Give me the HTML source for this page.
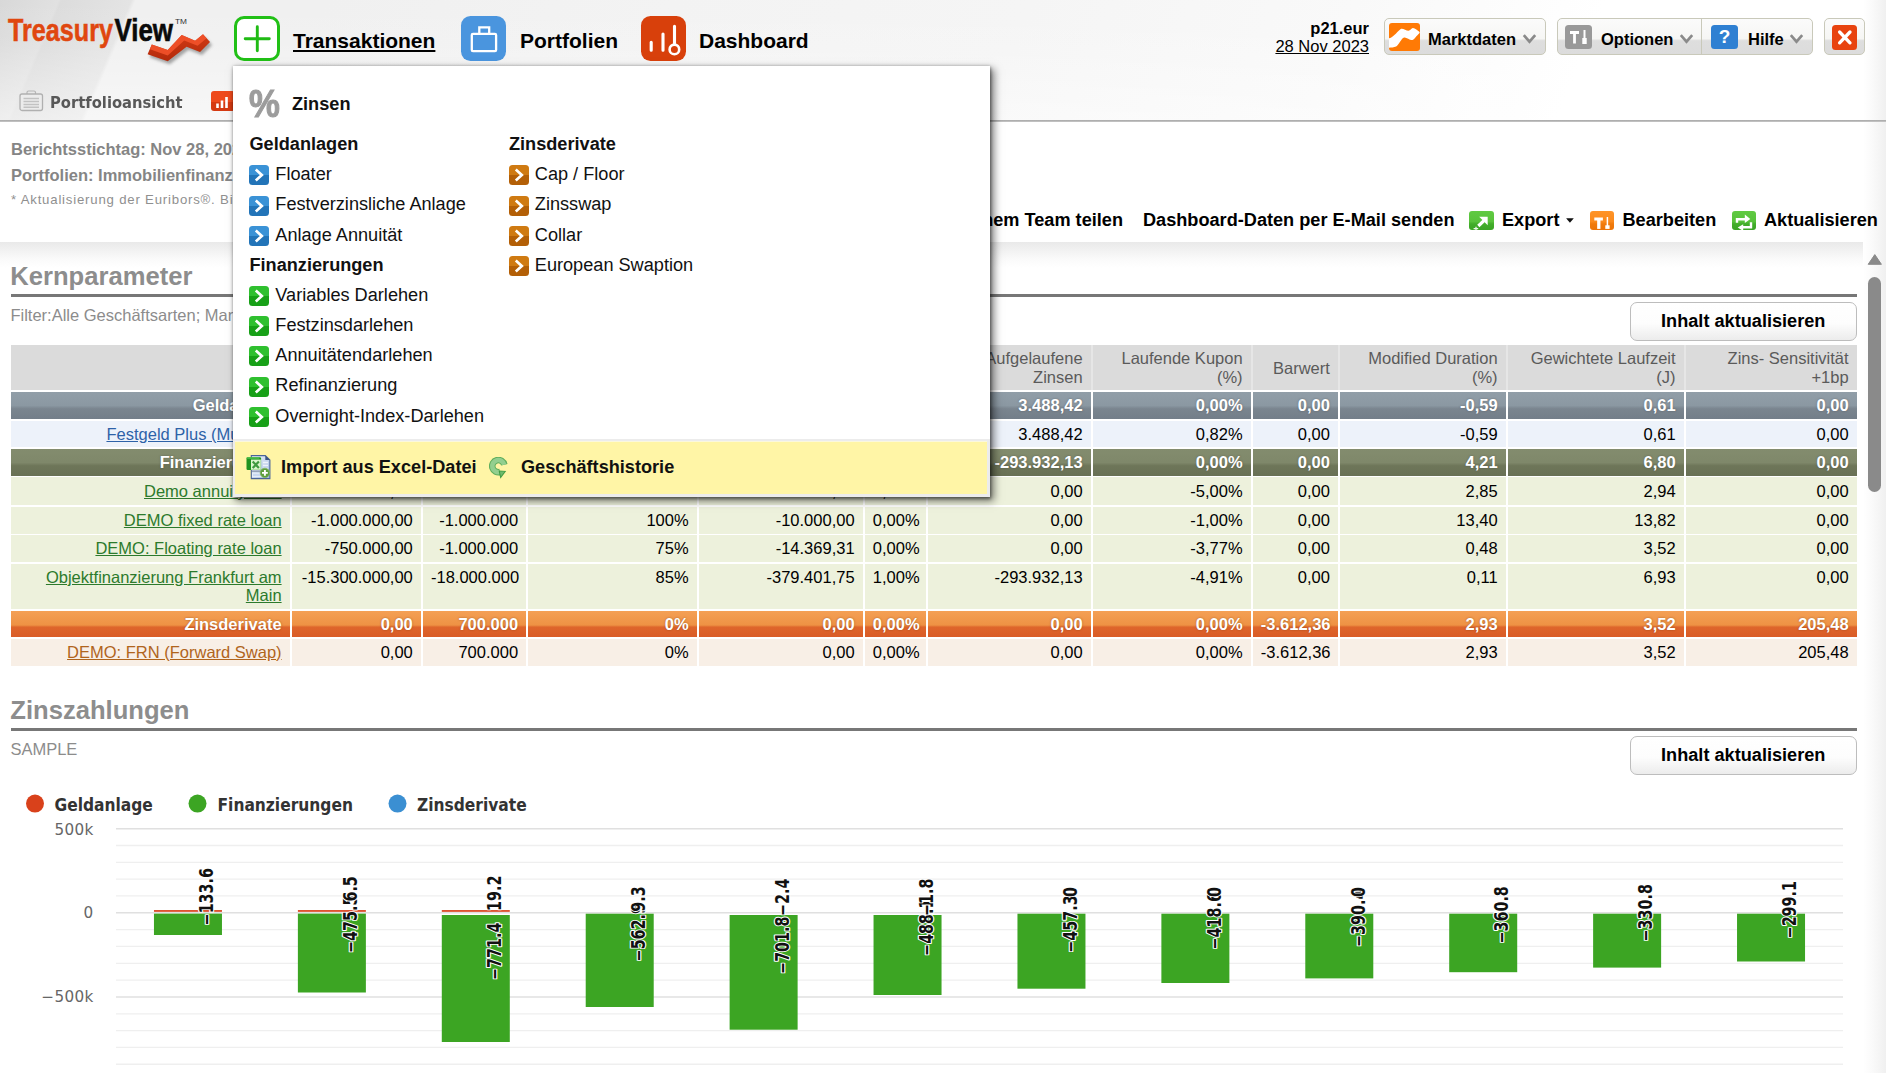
<!DOCTYPE html>
<html lang="de"><head><meta charset="utf-8"><title>TreasuryView</title>
<style>
*{box-sizing:border-box;margin:0;padding:0}
html,body{width:1886px;height:1073px;overflow:hidden;background:#fff}
body{position:relative;font-family:"Liberation Sans",Arial,sans-serif;font-size:16.5px;color:#000}
.abs{position:absolute}
.nw{white-space:nowrap}
a{color:inherit}
#hdr{left:0;top:0;width:1886px;height:120px;background:
 linear-gradient(180deg,rgba(255,255,255,0) 0%,rgba(255,255,255,.08) 35%,rgba(255,255,255,.48) 100%),
 linear-gradient(113deg,#d8d8d8 0px,#e1e1e1 54px,#dcdcdc 57px,#e4e4e4 121px,#f0f0f0 125px,#f0f0f0 300px,#f3f3f3 620px,#f5f5f5 950px,#f9f9f9 1250px,#fff 1480px)}
#hline{left:0;top:120px;width:1886px;height:2px;background:linear-gradient(#a6a6a6,#c9c9c9)}
.nav{top:27.5px;font-weight:bold;font-size:21px;line-height:26px;color:#000}
.ico45{top:16px;width:46px;height:46px;border-radius:9px}
.btn{top:18px;height:37px;border:1.5px solid #c9c9ba;border-radius:5px;background:linear-gradient(#fbfbfb 0%,#f6f6f4 56%,#dedede 62%,#dcdcdc 100%)}
.btxt{top:17px;font-weight:bold;font-size:16.5px;line-height:20px}
.tb{top:209px;font-weight:bold;font-size:18.15px;line-height:22px}
.h2{left:10.3px;font-weight:bold;font-size:25.6px;line-height:30px;color:#8d8d8d}
.hr{left:10.5px;width:1846.5px;height:3px;background:#777}
.ibtn{left:1629.5px;width:227.5px;height:39px;border:1.5px solid #bdbdbd;border-radius:7px;background:linear-gradient(#fff 0%,#fdfdfd 55%,#ececec 100%);font-weight:bold;font-size:18.15px;line-height:36px;text-align:center}
.c{position:absolute;text-align:right;padding-right:8.3px;padding-left:8.3px;white-space:nowrap;line-height:27px;height:27px;overflow:hidden}
.g1{background:linear-gradient(#919ea8 0%,#8b98a2 50%,#7a858f 62%,#737e89 100%);color:#fff;font-weight:bold;text-shadow:0 0 2px rgba(60,60,60,.5)}
.g2{background:linear-gradient(#838c6e 0%,#7f886a 50%,#6e7659 62%,#697155 100%);color:#fff;font-weight:bold;text-shadow:0 0 2px rgba(60,60,60,.5)}
.g3{background:linear-gradient(#f4a055 0%,#ee9244 54%,#de652b 62%,#d95c27 100%);color:#fff;font-weight:bold;text-shadow:0 0 2px rgba(90,40,0,.5)}
.r1{background:#edf2fa}
.r2{background:#edf1dc}
.r3{background:#f8efe6}
.th{background:#dbdbdb;color:#5a5a5a;line-height:18.3px;white-space:normal}
.lk1{color:#2d62a8;text-decoration:underline}
.lk2{color:#2c7a2c;text-decoration:underline}
.lk3{color:#b0641c;text-decoration:underline}
.mi{font-size:18.15px;line-height:22px;color:#111}
.mh{font-size:18.15px;line-height:22px;font-weight:bold;color:#111}
.arr{width:20px;height:20px;border-radius:3.5px}
</style></head>
<body>
<div id="hdr" class="abs"></div>
<div class="abs" style="left:1863px;top:0;width:23px;height:1073px;background:linear-gradient(90deg,rgba(255,255,255,0) 0%,rgba(250,250,250,1) 40%,#f0f0f0 100%)"></div>
<div id="hline" class="abs"></div>
<svg class="abs" style="left:0;top:0" width="230" height="70" viewBox="0 0 230 70">
<defs><linearGradient id="rb" x1="0" y1="0" x2="0" y2="1"><stop offset="0" stop-color="#d03a14"/><stop offset="1" stop-color="#b32a0b"/></linearGradient>
<filter id="sh" x="-20%" y="-20%" width="140%" height="160%"><feGaussianBlur stdDeviation="1.6"/></filter></defs>
<path d="M147.6 54.3 L151.8 44.6 L167.7 50.1 L181.7 35.1 L195.1 40.7 L203 34.2 L210 42.1 L200 52.1 L186.6 46.8 L167.7 61.3 Z" fill="#555" opacity=".5" filter="url(#sh)" transform="translate(2,3)"/>
<path d="M147.6 54.3 L151.8 44.6 L167.7 50.1 L181.7 35.1 L195.1 40.7 L203 34.2 L210 42.1 L200 52.1 L186.6 46.8 L167.7 61.3 Z" fill="url(#rb)"/>
<path d="M151.8 44.6 L167.7 50.1 L181.7 35.1 L195.1 40.7 L203 34.2 L206.6 38.3 L197.6 45.8 L184.2 40.6 L167.7 55.4 L149.9 49.3 Z" fill="#f2522a" opacity=".9"/>
<text x="8" y="41" font-family="Liberation Sans, Arial, sans-serif" font-weight="bold" font-size="30.5" fill="#e0470f" stroke="#e0470f" stroke-width=".55" textLength="105" lengthAdjust="spacingAndGlyphs">Treasury</text>
<text x="114.5" y="41" font-family="Liberation Sans, Arial, sans-serif" font-weight="bold" font-size="30.5" fill="#0a0a0a" stroke="#0a0a0a" stroke-width=".6" textLength="58.5" lengthAdjust="spacingAndGlyphs">View</text>
<text x="175" y="23.5" font-family="Liberation Sans, Arial, sans-serif" font-size="7.5" fill="#333" textLength="12" lengthAdjust="spacingAndGlyphs">TM</text>
</svg>
<div class="abs" style="left:234.4px;top:15.7px;width:45.8px;height:45.8px;border-radius:10px;background:#fff;border:3.2px solid #21c016"></div>
<svg class="abs" style="left:234px;top:15px" width="48" height="48"><path d="M23.3 11.8V35.7M11.2 23.8H35.3" stroke="#1fbb14" stroke-width="2.9" stroke-linecap="round" fill="none"/></svg>
<div class="abs nav nw" style="left:293px;text-decoration:underline;text-decoration-thickness:1.5px;text-underline-offset:1.6px">Transaktionen</div>
<div class="abs" style="left:460.7px;top:15.7px;width:45.3px;height:45.3px;border-radius:9.5px;background:#4a95de"></div>
<svg class="abs" style="left:460.7px;top:15.7px" width="46" height="46"><rect x="10.8" y="17.8" width="24.3" height="17.3" rx="1.2" fill="none" stroke="#fff" stroke-width="2.3"/><path d="M18.3 17.4V11.4h9.9V17.4" fill="none" stroke="#fff" stroke-width="2.3"/></svg>
<div class="abs nav nw" style="left:520px">Portfolien</div>
<div class="abs" style="left:640.8px;top:15.7px;width:45.3px;height:45.3px;border-radius:9.5px;background:#d8400b"></div>
<svg class="abs" style="left:640.8px;top:15.7px" width="46" height="46"><path d="M10.2 26.3v8M22 18v16.3M33.5 10.3v17" stroke="#fff" stroke-width="3.1" fill="none" stroke-linecap="round"/><circle cx="33.4" cy="33.4" r="4.8" fill="none" stroke="#fff" stroke-width="2.6"/></svg>
<div class="abs nav nw" style="left:699px">Dashboard</div>
<div class="abs nw" style="right:517px;top:19.3px;font-weight:bold;font-size:16.5px;line-height:19px;text-align:right">p21.eur</div>
<div class="abs nw" style="right:517px;top:37.2px;font-size:16.5px;line-height:19px;text-align:right;text-decoration:underline">28 Nov 2023</div>
<div class="abs btn" style="left:1384px;width:162px"></div>
<div class="abs" style="left:1389.3px;top:23.3px;width:30.6px;height:27.6px;border-radius:3px;background:#ff7a05;overflow:hidden"><svg width="31" height="28"><path d="M0 15.2 C3.5 15.2 7 10 11.7 6 C13.5 4.8 17 7.8 19.5 7.8 C21.2 7.8 22.3 5 23.9 5 C26.2 5 28.5 7.5 30.6 8.9 L30.6 9.9 C27 13 25.2 17 22.7 17 C20.5 17 17.2 14 15.2 14.5 C12 15.5 10 22 7.1 23.5 C5 24.6 2 24.5 0 24.8 Z" fill="#fff"/></svg></div>
<div class="abs btxt nw" style="left:1428px;top:28.5px">Marktdaten</div>
<svg class="abs" style="left:1521.5px;top:33.3px" width="16" height="12"><path d="M1.8 2.2 L7.5 8.6 L13.2 2.2" fill="none" stroke="#8a8a8a" stroke-width="2.7"/></svg>
<div class="abs btn" style="left:1557px;width:256px"></div>
<div class="abs" style="left:1700.5px;top:19px;width:1.5px;height:35px;background:#c9c9ba"></div>
<div class="abs" style="left:1565px;top:25px;width:27px;height:24px;border-radius:3.5px;background:#999"><svg width="27" height="24"><path d="M5 7.5h9M9.5 7.5v11" stroke="#fff" stroke-width="2.8" fill="none"/><path d="M19.5 5v9" stroke="#fff" stroke-width="2" fill="none"/><rect x="17.3" y="13" width="4.4" height="6" fill="#fff"/></svg></div>
<div class="abs btxt nw" style="left:1601px;top:28.5px">Optionen</div>
<svg class="abs" style="left:1678.5px;top:33.3px" width="16" height="12"><path d="M1.8 2.2 L7.5 8.6 L13.2 2.2" fill="none" stroke="#8a8a8a" stroke-width="2.7"/></svg>
<div class="abs" style="left:1711px;top:25px;width:27px;height:24px;border-radius:3.5px;background:#2f80d2;color:#fff;font-weight:bold;font-size:19px;line-height:24px;text-align:center">?</div>
<div class="abs btxt nw" style="left:1748px;top:28.5px">Hilfe</div>
<svg class="abs" style="left:1788.5px;top:33.3px" width="16" height="12"><path d="M1.8 2.2 L7.5 8.6 L13.2 2.2" fill="none" stroke="#8a8a8a" stroke-width="2.7"/></svg>
<div class="abs btn" style="left:1824px;width:41px"></div>
<div class="abs" style="left:1831.5px;top:24.5px;width:25.5px;height:25px;border-radius:3.5px;background:#e8430f"><svg width="26" height="25"><path d="M7.6 7 L18 17.8M18 7 L7.6 17.8" stroke="#fff" stroke-width="3.3" fill="none" stroke-linecap="round"/></svg></div>
<svg class="abs" style="left:19px;top:89.5px" width="25" height="22"><rect x="8" y="1" width="8.5" height="4" rx="1.5" fill="none" stroke="#b5b5b5" stroke-width="1.2"/><rect x="1" y="4" width="22.5" height="16.5" rx="2" fill="#ececec" stroke="#b0b0b0" stroke-width="1.3"/><path d="M4.5 8.5h15.5M4.5 11.5h15.5M4.5 14.5h15.5M4.5 17.3h15.5" stroke="#c2c2c2" stroke-width="1.4"/></svg>
<div class="abs nw" style="left:50px;top:93.2px;font-family:'DejaVu Sans',sans-serif;font-weight:bold;font-size:16.4px;line-height:20px;color:#585858;transform:scaleX(.9);transform-origin:0 50%">Portfolioansicht</div>
<div class="abs" style="left:211px;top:90.5px;width:24px;height:20.5px;border-radius:3px;background:linear-gradient(#ee4a1c 55%,#d53a12 55%)"><svg width="24" height="21"><path d="M6.5 12.5v4.5M11 9.5v7.5M15.5 6v11" stroke="#fff" stroke-width="2.6" fill="none"/></svg></div>
<div class="abs nw" style="left:11px;top:140px;font-weight:bold;font-size:16.5px;line-height:19px;color:#858585">Berichtsstichtag: Nov 28, 2023</div>
<div class="abs nw" style="left:11px;top:166px;font-weight:bold;font-size:16.5px;line-height:19px;color:#858585">Portfolien: Immobilienfinanzierung, Demo</div>
<div class="abs nw" style="left:11px;top:192.3px;font-size:13.2px;line-height:16px;letter-spacing:.8px;color:#8f8f8f">* Aktualisierung der Euribors®. Bitte beachten Sie die Hinweise.</div>
<div class="abs tb nw" style="right:763px">Mit meinem Team teilen</div>
<div class="abs tb nw" style="left:1143px">Dashboard-Daten per E-Mail senden</div>
<div class="abs" style="left:1469.3px;top:210.6px;width:24.5px;height:19.8px;border-radius:3px;background:linear-gradient(#60ca42 0%,#58c23b 55%,#42ad2a 68%,#3aa524 100%)"><svg width="25" height="20"><path d="M10.2 5.8H18.7V14.2Z" fill="#fff"/><path d="M15 9.6L9.3 15" stroke="#fff" stroke-width="3.2" fill="none"/><path d="M4.6 17.6h4.6M7 15.8v3.6" stroke="#fff" stroke-width="1.3" fill="none" opacity=".9"/></svg></div>
<div class="abs tb nw" style="left:1502px">Export</div>
<svg class="abs" style="left:1566px;top:218.4px" width="9" height="6"><path d="M0.1 0.3h7.7L3.95 4.7Z" fill="#111"/></svg>
<div class="abs" style="left:1590.2px;top:210.6px;width:24px;height:19.8px;border-radius:3px;background:linear-gradient(#ff9428 0%,#fb8a1c 55%,#f07a0c 68%,#ec7406 100%)"><svg width="24" height="20"><path d="M4.3 8h8.6" stroke="#fff" stroke-width="3" fill="none"/><path d="M8.8 7v10.9" stroke="#fff" stroke-width="3.3" fill="none"/><path d="M17.4 6v9" stroke="#fff" stroke-width="1.5" fill="none"/><rect x="15.3" y="14.3" width="4.3" height="3.6" fill="#fff"/></svg></div>
<div class="abs tb nw" style="left:1622.5px">Bearbeiten</div>
<div class="abs" style="left:1732px;top:210.6px;width:24.2px;height:19.8px;border-radius:3px;background:linear-gradient(#60ca42 0%,#58c23b 55%,#42ad2a 68%,#3aa524 100%)"><svg width="25" height="20"><path d="M5 11.8V8.2h8" stroke="#fff" stroke-width="2.4" fill="none"/><path d="M12.8 3.6L18.3 7.9L12.8 12Z" fill="#fff"/><path d="M19 11.3v5h-8" stroke="#fff" stroke-width="2.4" fill="none"/><path d="M11.2 13.2L5.7 16.6L11.2 19.9Z" fill="#fff"/></svg></div>
<div class="abs tb nw" style="left:1764px">Aktualisieren</div>
<div class="abs" style="left:0;top:242px;width:1863px;height:26px;background:linear-gradient(#e9e9e9 0%,#f1f1f1 30%,#fafafa 65%,#fff 100%)"></div>
<svg class="abs" style="left:1866px;top:253px" width="18" height="13"><path d="M2.2 11.3 L8.8 1.6 L15.4 11.3 Z" fill="#8a8a8a" stroke="#8a8a8a" stroke-width="1" stroke-linejoin="round"/></svg>
<div class="abs" style="left:1868px;top:277px;width:13.3px;height:214.5px;border-radius:6.6px;background:#8a8a8a"></div>
<div class="abs h2 nw" style="top:260.5px">Kernparameter</div>
<div class="abs hr" style="top:293.6px"></div>
<div class="abs nw" style="left:10.4px;top:306px;font-size:16.5px;line-height:19px;color:#8c8c8c">Filter:Alle Geschäftsarten; Marktdaten per 28.11.2023</div>
<div class="abs ibtn" style="top:301.5px">Inhalt aktualisieren</div>
<div class="abs" style="left:11px;top:345.2px;width:1846px;height:44.4px;background:#e6e6e6"></div>
<div class="c th" style="left:11px;top:345.2px;width:278.9px;height:44.4px;padding-top:13.4px"></div>
<div class="c th" style="left:291.5px;top:345.2px;width:129.6px;height:44.4px;padding-top:4.2px">Aktueller Betrag</div>
<div class="c th" style="left:422.7px;top:345.2px;width:103.7px;height:44.4px;padding-top:13.4px">Nominal</div>
<div class="c th" style="left:528px;top:345.2px;width:168.9px;height:44.4px;padding-top:4.2px">Auslastung (%)</div>
<div class="c th" style="left:698.5px;top:345.2px;width:164.4px;height:44.4px;padding-top:4.2px">Zinsen lfd. Jahr</div>
<div class="c th" style="left:864.5px;top:345.2px;width:61.6px;height:44.4px;padding-top:13.4px">Marge</div>
<div class="c th" style="left:927.7px;top:345.2px;width:163.2px;height:44.4px;padding-top:4.2px">Aufgelaufene Zinsen</div>
<div class="c th" style="left:1092.5px;top:345.2px;width:158.4px;height:44.4px;padding-top:4.2px">Laufende Kupon (%)</div>
<div class="c th" style="left:1252.5px;top:345.2px;width:85.7px;height:44.4px;padding-top:13.4px">Barwert</div>
<div class="c th" style="left:1339.8px;top:345.2px;width:166.1px;height:44.4px;padding-top:4.2px">Modified Duration (%)</div>
<div class="c th" style="left:1507.5px;top:345.2px;width:176.4px;height:44.4px;padding-top:4.2px">Gewichtete Laufzeit (J)</div>
<div class="c th" style="left:1685.5px;top:345.2px;width:171.4px;height:44.4px;padding-top:4.2px">Zins- Sensitivität +1bp</div>
<div class="c g1" style="left:11px;width:278.9px;top:391.5px;height:27.2px;line-height:27.2px;padding-top:0px;">Geldanlage</div><div class="c g1" style="left:291.5px;width:129.6px;top:391.5px;height:27.2px;line-height:27.2px;padding-top:0px;">100.000,00</div><div class="c g1" style="left:422.7px;width:103.7px;top:391.5px;height:27.2px;line-height:27.2px;padding-top:0px;">100.000</div><div class="c g1" style="left:528px;width:168.9px;top:391.5px;height:27.2px;line-height:27.2px;padding-top:0px;">100%</div><div class="c g1" style="left:698.5px;width:164.4px;top:391.5px;height:27.2px;line-height:27.2px;padding-top:0px;">820,00</div><div class="c g1" style="left:864.5px;width:61.6px;top:391.5px;height:27.2px;line-height:27.2px;padding-top:0px;">0,00%</div><div class="c g1" style="left:927.7px;width:163.2px;top:391.5px;height:27.2px;line-height:27.2px;padding-top:0px;">3.488,42</div><div class="c g1" style="left:1092.5px;width:158.4px;top:391.5px;height:27.2px;line-height:27.2px;padding-top:0px;">0,00%</div><div class="c g1" style="left:1252.5px;width:85.7px;top:391.5px;height:27.2px;line-height:27.2px;padding-top:0px;">0,00</div><div class="c g1" style="left:1339.8px;width:166.1px;top:391.5px;height:27.2px;line-height:27.2px;padding-top:0px;">-0,59</div><div class="c g1" style="left:1507.5px;width:176.4px;top:391.5px;height:27.2px;line-height:27.2px;padding-top:0px;">0,61</div><div class="c g1" style="left:1685.5px;width:171.4px;top:391.5px;height:27.2px;line-height:27.2px;padding-top:0px;">0,00</div>
<div class="c r1" style="left:11px;width:278.9px;top:420.5px;height:26.9px;line-height:26.9px;padding-top:0px;"><a class="lk1">Festgeld Plus (Muster I)</a></div><div class="c r1" style="left:291.5px;width:129.6px;top:420.5px;height:26.9px;line-height:26.9px;padding-top:0px;">100.000,00</div><div class="c r1" style="left:422.7px;width:103.7px;top:420.5px;height:26.9px;line-height:26.9px;padding-top:0px;">100.000</div><div class="c r1" style="left:528px;width:168.9px;top:420.5px;height:26.9px;line-height:26.9px;padding-top:0px;">100%</div><div class="c r1" style="left:698.5px;width:164.4px;top:420.5px;height:26.9px;line-height:26.9px;padding-top:0px;">820,00</div><div class="c r1" style="left:864.5px;width:61.6px;top:420.5px;height:26.9px;line-height:26.9px;padding-top:0px;">0,00%</div><div class="c r1" style="left:927.7px;width:163.2px;top:420.5px;height:26.9px;line-height:26.9px;padding-top:0px;">3.488,42</div><div class="c r1" style="left:1092.5px;width:158.4px;top:420.5px;height:26.9px;line-height:26.9px;padding-top:0px;">0,82%</div><div class="c r1" style="left:1252.5px;width:85.7px;top:420.5px;height:26.9px;line-height:26.9px;padding-top:0px;">0,00</div><div class="c r1" style="left:1339.8px;width:166.1px;top:420.5px;height:26.9px;line-height:26.9px;padding-top:0px;">-0,59</div><div class="c r1" style="left:1507.5px;width:176.4px;top:420.5px;height:26.9px;line-height:26.9px;padding-top:0px;">0,61</div><div class="c r1" style="left:1685.5px;width:171.4px;top:420.5px;height:26.9px;line-height:26.9px;padding-top:0px;">0,00</div>
<div class="c g2" style="left:11px;width:278.9px;top:449.2px;height:26.4px;line-height:26.4px;padding-top:0px;">Finanzierungen</div><div class="c g2" style="left:291.5px;width:129.6px;top:449.2px;height:26.4px;line-height:26.4px;padding-top:0px;">-17.550.000,00</div><div class="c g2" style="left:422.7px;width:103.7px;top:449.2px;height:26.4px;line-height:26.4px;padding-top:0px;">-20.500.000</div><div class="c g2" style="left:528px;width:168.9px;top:449.2px;height:26.4px;line-height:26.4px;padding-top:0px;">86%</div><div class="c g2" style="left:698.5px;width:164.4px;top:449.2px;height:26.4px;line-height:26.4px;padding-top:0px;">-428.771,06</div><div class="c g2" style="left:864.5px;width:61.6px;top:449.2px;height:26.4px;line-height:26.4px;padding-top:0px;">0,00%</div><div class="c g2" style="left:927.7px;width:163.2px;top:449.2px;height:26.4px;line-height:26.4px;padding-top:0px;">-293.932,13</div><div class="c g2" style="left:1092.5px;width:158.4px;top:449.2px;height:26.4px;line-height:26.4px;padding-top:0px;">0,00%</div><div class="c g2" style="left:1252.5px;width:85.7px;top:449.2px;height:26.4px;line-height:26.4px;padding-top:0px;">0,00</div><div class="c g2" style="left:1339.8px;width:166.1px;top:449.2px;height:26.4px;line-height:26.4px;padding-top:0px;">4,21</div><div class="c g2" style="left:1507.5px;width:176.4px;top:449.2px;height:26.4px;line-height:26.4px;padding-top:0px;">6,80</div><div class="c g2" style="left:1685.5px;width:171.4px;top:449.2px;height:26.4px;line-height:26.4px;padding-top:0px;">0,00</div>
<div class="c r2" style="left:11px;width:278.9px;top:477.2px;height:27.6px;line-height:27.6px;padding-top:0.6px;"><a class="lk2">Demo annuity loan</a></div><div class="c r2" style="left:291.5px;width:129.6px;top:477.2px;height:27.6px;line-height:27.6px;padding-top:0.6px;">-500.000,00</div><div class="c r2" style="left:422.7px;width:103.7px;top:477.2px;height:27.6px;line-height:27.6px;padding-top:0.6px;">-500.000</div><div class="c r2" style="left:528px;width:168.9px;top:477.2px;height:27.6px;line-height:27.6px;padding-top:0.6px;">100%</div><div class="c r2" style="left:698.5px;width:164.4px;top:477.2px;height:27.6px;line-height:27.6px;padding-top:0.6px;">-25.000,00</div><div class="c r2" style="left:864.5px;width:61.6px;top:477.2px;height:27.6px;line-height:27.6px;padding-top:0.6px;">0,00%</div><div class="c r2" style="left:927.7px;width:163.2px;top:477.2px;height:27.6px;line-height:27.6px;padding-top:0.6px;">0,00</div><div class="c r2" style="left:1092.5px;width:158.4px;top:477.2px;height:27.6px;line-height:27.6px;padding-top:0.6px;">-5,00%</div><div class="c r2" style="left:1252.5px;width:85.7px;top:477.2px;height:27.6px;line-height:27.6px;padding-top:0.6px;">0,00</div><div class="c r2" style="left:1339.8px;width:166.1px;top:477.2px;height:27.6px;line-height:27.6px;padding-top:0.6px;">2,85</div><div class="c r2" style="left:1507.5px;width:176.4px;top:477.2px;height:27.6px;line-height:27.6px;padding-top:0.6px;">2,94</div><div class="c r2" style="left:1685.5px;width:171.4px;top:477.2px;height:27.6px;line-height:27.6px;padding-top:0.6px;">0,00</div>
<div class="c r2" style="left:11px;width:278.9px;top:506.5px;height:27.0px;line-height:27.0px;padding-top:0px;"><a class="lk2">DEMO fixed rate loan</a></div><div class="c r2" style="left:291.5px;width:129.6px;top:506.5px;height:27.0px;line-height:27.0px;padding-top:0px;">-1.000.000,00</div><div class="c r2" style="left:422.7px;width:103.7px;top:506.5px;height:27.0px;line-height:27.0px;padding-top:0px;">-1.000.000</div><div class="c r2" style="left:528px;width:168.9px;top:506.5px;height:27.0px;line-height:27.0px;padding-top:0px;">100%</div><div class="c r2" style="left:698.5px;width:164.4px;top:506.5px;height:27.0px;line-height:27.0px;padding-top:0px;">-10.000,00</div><div class="c r2" style="left:864.5px;width:61.6px;top:506.5px;height:27.0px;line-height:27.0px;padding-top:0px;">0,00%</div><div class="c r2" style="left:927.7px;width:163.2px;top:506.5px;height:27.0px;line-height:27.0px;padding-top:0px;">0,00</div><div class="c r2" style="left:1092.5px;width:158.4px;top:506.5px;height:27.0px;line-height:27.0px;padding-top:0px;">-1,00%</div><div class="c r2" style="left:1252.5px;width:85.7px;top:506.5px;height:27.0px;line-height:27.0px;padding-top:0px;">0,00</div><div class="c r2" style="left:1339.8px;width:166.1px;top:506.5px;height:27.0px;line-height:27.0px;padding-top:0px;">13,40</div><div class="c r2" style="left:1507.5px;width:176.4px;top:506.5px;height:27.0px;line-height:27.0px;padding-top:0px;">13,82</div><div class="c r2" style="left:1685.5px;width:171.4px;top:506.5px;height:27.0px;line-height:27.0px;padding-top:0px;">0,00</div>
<div class="c r2" style="left:11px;width:278.9px;top:535.2px;height:27.1px;line-height:27.1px;padding-top:0px;"><a class="lk2">DEMO: Floating rate loan</a></div><div class="c r2" style="left:291.5px;width:129.6px;top:535.2px;height:27.1px;line-height:27.1px;padding-top:0px;">-750.000,00</div><div class="c r2" style="left:422.7px;width:103.7px;top:535.2px;height:27.1px;line-height:27.1px;padding-top:0px;">-1.000.000</div><div class="c r2" style="left:528px;width:168.9px;top:535.2px;height:27.1px;line-height:27.1px;padding-top:0px;">75%</div><div class="c r2" style="left:698.5px;width:164.4px;top:535.2px;height:27.1px;line-height:27.1px;padding-top:0px;">-14.369,31</div><div class="c r2" style="left:864.5px;width:61.6px;top:535.2px;height:27.1px;line-height:27.1px;padding-top:0px;">0,00%</div><div class="c r2" style="left:927.7px;width:163.2px;top:535.2px;height:27.1px;line-height:27.1px;padding-top:0px;">0,00</div><div class="c r2" style="left:1092.5px;width:158.4px;top:535.2px;height:27.1px;line-height:27.1px;padding-top:0px;">-3,77%</div><div class="c r2" style="left:1252.5px;width:85.7px;top:535.2px;height:27.1px;line-height:27.1px;padding-top:0px;">0,00</div><div class="c r2" style="left:1339.8px;width:166.1px;top:535.2px;height:27.1px;line-height:27.1px;padding-top:0px;">0,48</div><div class="c r2" style="left:1507.5px;width:176.4px;top:535.2px;height:27.1px;line-height:27.1px;padding-top:0px;">3,52</div><div class="c r2" style="left:1685.5px;width:171.4px;top:535.2px;height:27.1px;line-height:27.1px;padding-top:0px;">0,00</div>
<div class="c r2" style="left:11px;width:278.9px;top:563.9px;height:45.0px;line-height:18.4px;padding-top:4.2px;white-space:normal;"><a class="lk2">Objektfinanzierung Frankfurt am Main</a></div><div class="c r2" style="left:291.5px;width:129.6px;top:563.9px;height:45.0px;line-height:18.4px;padding-top:4.2px;">-15.300.000,00</div><div class="c r2" style="left:422.7px;width:103.7px;top:563.9px;height:45.0px;line-height:18.4px;padding-top:4.2px;">-18.000.000</div><div class="c r2" style="left:528px;width:168.9px;top:563.9px;height:45.0px;line-height:18.4px;padding-top:4.2px;">85%</div><div class="c r2" style="left:698.5px;width:164.4px;top:563.9px;height:45.0px;line-height:18.4px;padding-top:4.2px;">-379.401,75</div><div class="c r2" style="left:864.5px;width:61.6px;top:563.9px;height:45.0px;line-height:18.4px;padding-top:4.2px;">1,00%</div><div class="c r2" style="left:927.7px;width:163.2px;top:563.9px;height:45.0px;line-height:18.4px;padding-top:4.2px;">-293.932,13</div><div class="c r2" style="left:1092.5px;width:158.4px;top:563.9px;height:45.0px;line-height:18.4px;padding-top:4.2px;">-4,91%</div><div class="c r2" style="left:1252.5px;width:85.7px;top:563.9px;height:45.0px;line-height:18.4px;padding-top:4.2px;">0,00</div><div class="c r2" style="left:1339.8px;width:166.1px;top:563.9px;height:45.0px;line-height:18.4px;padding-top:4.2px;">0,11</div><div class="c r2" style="left:1507.5px;width:176.4px;top:563.9px;height:45.0px;line-height:18.4px;padding-top:4.2px;">6,93</div><div class="c r2" style="left:1685.5px;width:171.4px;top:563.9px;height:45.0px;line-height:18.4px;padding-top:4.2px;">0,00</div>
<div class="c g3" style="left:11px;width:278.9px;top:610.6px;height:26.6px;line-height:26.6px;padding-top:0px;">Zinsderivate</div><div class="c g3" style="left:291.5px;width:129.6px;top:610.6px;height:26.6px;line-height:26.6px;padding-top:0px;">0,00</div><div class="c g3" style="left:422.7px;width:103.7px;top:610.6px;height:26.6px;line-height:26.6px;padding-top:0px;">700.000</div><div class="c g3" style="left:528px;width:168.9px;top:610.6px;height:26.6px;line-height:26.6px;padding-top:0px;">0%</div><div class="c g3" style="left:698.5px;width:164.4px;top:610.6px;height:26.6px;line-height:26.6px;padding-top:0px;">0,00</div><div class="c g3" style="left:864.5px;width:61.6px;top:610.6px;height:26.6px;line-height:26.6px;padding-top:0px;">0,00%</div><div class="c g3" style="left:927.7px;width:163.2px;top:610.6px;height:26.6px;line-height:26.6px;padding-top:0px;">0,00</div><div class="c g3" style="left:1092.5px;width:158.4px;top:610.6px;height:26.6px;line-height:26.6px;padding-top:0px;">0,00%</div><div class="c g3" style="left:1252.5px;width:85.7px;top:610.6px;height:26.6px;line-height:26.6px;padding-top:0px;">-3.612,36</div><div class="c g3" style="left:1339.8px;width:166.1px;top:610.6px;height:26.6px;line-height:26.6px;padding-top:0px;">2,93</div><div class="c g3" style="left:1507.5px;width:176.4px;top:610.6px;height:26.6px;line-height:26.6px;padding-top:0px;">3,52</div><div class="c g3" style="left:1685.5px;width:171.4px;top:610.6px;height:26.6px;line-height:26.6px;padding-top:0px;">205,48</div>
<div class="c r3" style="left:11px;width:278.9px;top:638.9px;height:27.4px;line-height:27.4px;padding-top:0px;"><a class="lk3">DEMO: FRN (Forward Swap)</a></div><div class="c r3" style="left:291.5px;width:129.6px;top:638.9px;height:27.4px;line-height:27.4px;padding-top:0px;">0,00</div><div class="c r3" style="left:422.7px;width:103.7px;top:638.9px;height:27.4px;line-height:27.4px;padding-top:0px;">700.000</div><div class="c r3" style="left:528px;width:168.9px;top:638.9px;height:27.4px;line-height:27.4px;padding-top:0px;">0%</div><div class="c r3" style="left:698.5px;width:164.4px;top:638.9px;height:27.4px;line-height:27.4px;padding-top:0px;">0,00</div><div class="c r3" style="left:864.5px;width:61.6px;top:638.9px;height:27.4px;line-height:27.4px;padding-top:0px;">0,00%</div><div class="c r3" style="left:927.7px;width:163.2px;top:638.9px;height:27.4px;line-height:27.4px;padding-top:0px;">0,00</div><div class="c r3" style="left:1092.5px;width:158.4px;top:638.9px;height:27.4px;line-height:27.4px;padding-top:0px;">0,00%</div><div class="c r3" style="left:1252.5px;width:85.7px;top:638.9px;height:27.4px;line-height:27.4px;padding-top:0px;">-3.612,36</div><div class="c r3" style="left:1339.8px;width:166.1px;top:638.9px;height:27.4px;line-height:27.4px;padding-top:0px;">2,93</div><div class="c r3" style="left:1507.5px;width:176.4px;top:638.9px;height:27.4px;line-height:27.4px;padding-top:0px;">3,52</div><div class="c r3" style="left:1685.5px;width:171.4px;top:638.9px;height:27.4px;line-height:27.4px;padding-top:0px;">205,48</div>
<div class="abs h2 nw" style="top:695.2px">Zinszahlungen</div>
<div class="abs hr" style="top:728px"></div>
<div class="abs nw" style="left:10.4px;top:740.3px;font-size:16.5px;line-height:19px;color:#8c8c8c">SAMPLE</div>
<div class="abs ibtn" style="top:736px">Inhalt aktualisieren</div>
<svg class="abs" style="left:0;top:780px" width="1863" height="293" viewBox="0 780 1863 293" font-family="DejaVu Sans, sans-serif">
<path d="M116.0 828.65H1843.0" stroke="#e0e0e0" stroke-width="1.5"/>
<path d="M116.0 845.48H1843.0" stroke="#efefef" stroke-width="1.3"/>
<path d="M116.0 862.31H1843.0" stroke="#efefef" stroke-width="1.3"/>
<path d="M116.0 879.14H1843.0" stroke="#efefef" stroke-width="1.3"/>
<path d="M116.0 895.97H1843.0" stroke="#efefef" stroke-width="1.3"/>
<path d="M116.0 912.80H1843.0" stroke="#e0e0e0" stroke-width="1.5"/>
<path d="M116.0 929.63H1843.0" stroke="#efefef" stroke-width="1.3"/>
<path d="M116.0 946.46H1843.0" stroke="#efefef" stroke-width="1.3"/>
<path d="M116.0 963.29H1843.0" stroke="#efefef" stroke-width="1.3"/>
<path d="M116.0 980.12H1843.0" stroke="#efefef" stroke-width="1.3"/>
<path d="M116.0 996.95H1843.0" stroke="#e0e0e0" stroke-width="1.5"/>
<path d="M116.0 1013.78H1843.0" stroke="#efefef" stroke-width="1.3"/>
<path d="M116.0 1030.61H1843.0" stroke="#efefef" stroke-width="1.3"/>
<path d="M116.0 1047.44H1843.0" stroke="#efefef" stroke-width="1.3"/>
<path d="M116.0 1064.27H1843.0" stroke="#efefef" stroke-width="1.3"/>
<circle cx="35" cy="803.6" r="9" fill="#d9411b"/>
<text transform="translate(54.5 811) scale(.9 1)" font-size="17.2" font-weight="bold" fill="#333">Geldanlage</text>
<circle cx="197.5" cy="803.6" r="9" fill="#3ca523"/>
<text transform="translate(217.5 811) scale(.9 1)" font-size="17.2" font-weight="bold" fill="#333">Finanzierungen</text>
<circle cx="397.5" cy="803.6" r="9" fill="#3b8fd2"/>
<text transform="translate(417 811) scale(.9 1)" font-size="17.2" font-weight="bold" fill="#333">Zinsderivate</text>
<text x="93.6" y="835" font-family="DejaVu Sans, sans-serif" font-size="15.2" letter-spacing=".35" fill="#666" text-anchor="end">500k</text>
<text x="93.6" y="918.3" font-family="DejaVu Sans, sans-serif" font-size="15.2" letter-spacing=".35" fill="#666" text-anchor="end">0</text>
<text x="93.6" y="1002.3" font-family="DejaVu Sans, sans-serif" font-size="15.2" letter-spacing=".35" fill="#666" text-anchor="end">−500k</text>
<rect x="153.96" y="913.6" width="68" height="21.4" fill="#3ca523"/>
<rect x="153.96" y="910.1" width="68" height="1.7" fill="#d9411b"/>
<rect x="297.88" y="913.6" width="68" height="78.9" fill="#3ca523"/>
<rect x="297.88" y="910.1" width="68" height="1.7" fill="#d9411b"/>
<rect x="441.79" y="915" width="68" height="127.0" fill="#3ca523"/>
<rect x="441.79" y="910.1" width="68" height="1.7" fill="#d9411b"/>
<rect x="585.71" y="913.7" width="68" height="93.3" fill="#3ca523"/>
<rect x="729.62" y="915" width="68" height="114.7" fill="#3ca523"/>
<rect x="873.54" y="915" width="68" height="80.0" fill="#3ca523"/>
<rect x="1017.46" y="913.7" width="68" height="75.0" fill="#3ca523"/>
<rect x="1161.38" y="913.7" width="68" height="69.3" fill="#3ca523"/>
<rect x="1305.29" y="913.7" width="68" height="64.7" fill="#3ca523"/>
<rect x="1449.21" y="913.7" width="68" height="58.5" fill="#3ca523"/>
<rect x="1593.12" y="913.7" width="68" height="53.9" fill="#3ca523"/>
<rect x="1737.04" y="913.7" width="68" height="47.8" fill="#3ca523"/>
<text transform="translate(213.2 925.4) rotate(-90) scale(.756 1)" font-size="19" font-weight="bold" fill="#111" stroke="#fff" stroke-width="2.3" stroke-linejoin="round" paint-order="stroke">−133.6</text>
<text transform="translate(357.1 953) rotate(-90) scale(.756 1)" font-size="19" font-weight="bold" fill="#111" stroke="#fff" stroke-width="2.3" stroke-linejoin="round" paint-order="stroke">−475.5</text>
<text transform="translate(357.1 901.6) rotate(-90) scale(.756 1)" font-size="19" font-weight="bold" fill="#111" stroke="#fff" stroke-width="2.3" stroke-linejoin="round" paint-order="stroke">6.5</text>
<text transform="translate(501.0 980) rotate(-90) scale(.756 1)" font-size="19" font-weight="bold" fill="#111" stroke="#fff" stroke-width="2.3" stroke-linejoin="round" paint-order="stroke">−771.4</text>
<text transform="translate(501.0 911) rotate(-90) scale(.756 1)" font-size="19" font-weight="bold" fill="#111" stroke="#fff" stroke-width="2.3" stroke-linejoin="round" paint-order="stroke">19.2</text>
<text transform="translate(644.9 961.4) rotate(-90) scale(.756 1)" font-size="19" font-weight="bold" fill="#111" stroke="#fff" stroke-width="2.3" stroke-linejoin="round" paint-order="stroke">−562.9</text>
<text transform="translate(644.9 911.8) rotate(-90) scale(.756 1)" font-size="19" font-weight="bold" fill="#111" stroke="#fff" stroke-width="2.3" stroke-linejoin="round" paint-order="stroke">9.3</text>
<text transform="translate(788.8 973.9) rotate(-90) scale(.756 1)" font-size="19" font-weight="bold" fill="#111" stroke="#fff" stroke-width="2.3" stroke-linejoin="round" paint-order="stroke">−701.8</text>
<text transform="translate(788.8 916) rotate(-90) scale(.756 1)" font-size="19" font-weight="bold" fill="#111" stroke="#fff" stroke-width="2.3" stroke-linejoin="round" paint-order="stroke">−2.4</text>
<text transform="translate(932.7 955.9) rotate(-90) scale(.756 1)" font-size="19" font-weight="bold" fill="#111" stroke="#fff" stroke-width="2.3" stroke-linejoin="round" paint-order="stroke">−488.1</text>
<text transform="translate(932.7 916) rotate(-90) scale(.756 1)" font-size="19" font-weight="bold" fill="#111" stroke="#fff" stroke-width="2.3" stroke-linejoin="round" paint-order="stroke">−1.8</text>
<text transform="translate(1076.7 952.7) rotate(-90) scale(.756 1)" font-size="19" font-weight="bold" fill="#111" stroke="#fff" stroke-width="2.3" stroke-linejoin="round" paint-order="stroke">−457.3</text>
<text transform="translate(1076.7 897) rotate(-90) scale(.756 1)" font-size="19" font-weight="bold" fill="#111" stroke="#fff" stroke-width="2.3" stroke-linejoin="round" paint-order="stroke">0</text>
<text transform="translate(1220.6 949.5) rotate(-90) scale(.756 1)" font-size="19" font-weight="bold" fill="#111" stroke="#fff" stroke-width="2.3" stroke-linejoin="round" paint-order="stroke">−418.6</text>
<text transform="translate(1220.6 897) rotate(-90) scale(.756 1)" font-size="19" font-weight="bold" fill="#111" stroke="#fff" stroke-width="2.3" stroke-linejoin="round" paint-order="stroke">0</text>
<text transform="translate(1364.5 947) rotate(-90) scale(.756 1)" font-size="19" font-weight="bold" fill="#111" stroke="#fff" stroke-width="2.3" stroke-linejoin="round" paint-order="stroke">−390.4</text>
<text transform="translate(1364.5 897) rotate(-90) scale(.756 1)" font-size="19" font-weight="bold" fill="#111" stroke="#fff" stroke-width="2.3" stroke-linejoin="round" paint-order="stroke">0</text>
<text transform="translate(1508.4 943.6) rotate(-90) scale(.756 1)" font-size="19" font-weight="bold" fill="#111" stroke="#fff" stroke-width="2.3" stroke-linejoin="round" paint-order="stroke">−360.8</text>
<text transform="translate(1652.3 941.5) rotate(-90) scale(.756 1)" font-size="19" font-weight="bold" fill="#111" stroke="#fff" stroke-width="2.3" stroke-linejoin="round" paint-order="stroke">−330.8</text>
<text transform="translate(1796.2 938.4) rotate(-90) scale(.756 1)" font-size="19" font-weight="bold" fill="#111" stroke="#fff" stroke-width="2.3" stroke-linejoin="round" paint-order="stroke">−299.1</text>
</svg>
<div class="abs" style="left:233.1px;top:66px;width:757px;height:431.4px;background:#fff;box-shadow:3px 3.5px 8px 0.5px rgba(0,0,0,.5),1px 2px 3px rgba(0,0,0,.35),0 0 3px rgba(0,0,0,.2)"></div>
<div class="abs" style="left:233.1px;top:439.2px;width:757px;height:58.2px;background:#ececec"></div><div class="abs" style="left:235.3px;top:440.6px;width:752px;height:53.8px;background:#fff5a6;border-top:1.6px solid #fbf8dc"></div>
<div class="abs nw" style="left:248.5px;top:83px;font-weight:bold;font-size:39px;line-height:42px;color:#9c9c9c;-webkit-text-stroke:1.1px #9c9c9c;transform:scaleX(.89);transform-origin:0 0">%</div>
<div class="abs mh nw" style="left:292px;top:92.5px">Zinsen</div>
<div class="abs mh nw" style="left:249.5px;top:133.0px">Geldanlagen</div>
<div class="abs arr" style="left:249px;top:165.4px;background:linear-gradient(#3a92d6 0%,#3a92d6 48%,#2274b8 52%,#2274b8 100%)"><svg width="20" height="20"><path d="M6.8 4.6 L12.8 10 L6.8 15.4" fill="none" stroke="#fff" stroke-width="2.7"/></svg></div><div class="abs mi nw" style="left:275.3px;top:163.2px">Floater</div>
<div class="abs arr" style="left:249px;top:195.5px;background:linear-gradient(#3a92d6 0%,#3a92d6 48%,#2274b8 52%,#2274b8 100%)"><svg width="20" height="20"><path d="M6.8 4.6 L12.8 10 L6.8 15.4" fill="none" stroke="#fff" stroke-width="2.7"/></svg></div><div class="abs mi nw" style="left:275.3px;top:193.3px">Festverzinsliche Anlage</div>
<div class="abs arr" style="left:249px;top:225.7px;background:linear-gradient(#3a92d6 0%,#3a92d6 48%,#2274b8 52%,#2274b8 100%)"><svg width="20" height="20"><path d="M6.8 4.6 L12.8 10 L6.8 15.4" fill="none" stroke="#fff" stroke-width="2.7"/></svg></div><div class="abs mi nw" style="left:275.3px;top:223.5px">Anlage Annuität</div>
<div class="abs mh nw" style="left:249.5px;top:253.7px">Finanzierungen</div>
<div class="abs arr" style="left:249px;top:286.1px;background:linear-gradient(#2fc02f 0%,#2fc02f 48%,#17a017 52%,#17a017 100%)"><svg width="20" height="20"><path d="M6.8 4.6 L12.8 10 L6.8 15.4" fill="none" stroke="#fff" stroke-width="2.7"/></svg></div><div class="abs mi nw" style="left:275.3px;top:283.9px">Variables Darlehen</div>
<div class="abs arr" style="left:249px;top:316.2px;background:linear-gradient(#2fc02f 0%,#2fc02f 48%,#17a017 52%,#17a017 100%)"><svg width="20" height="20"><path d="M6.8 4.6 L12.8 10 L6.8 15.4" fill="none" stroke="#fff" stroke-width="2.7"/></svg></div><div class="abs mi nw" style="left:275.3px;top:314.0px">Festzinsdarlehen</div>
<div class="abs arr" style="left:249px;top:346.4px;background:linear-gradient(#2fc02f 0%,#2fc02f 48%,#17a017 52%,#17a017 100%)"><svg width="20" height="20"><path d="M6.8 4.6 L12.8 10 L6.8 15.4" fill="none" stroke="#fff" stroke-width="2.7"/></svg></div><div class="abs mi nw" style="left:275.3px;top:344.2px">Annuitätendarlehen</div>
<div class="abs arr" style="left:249px;top:376.6px;background:linear-gradient(#2fc02f 0%,#2fc02f 48%,#17a017 52%,#17a017 100%)"><svg width="20" height="20"><path d="M6.8 4.6 L12.8 10 L6.8 15.4" fill="none" stroke="#fff" stroke-width="2.7"/></svg></div><div class="abs mi nw" style="left:275.3px;top:374.4px">Refinanzierung</div>
<div class="abs arr" style="left:249px;top:406.7px;background:linear-gradient(#2fc02f 0%,#2fc02f 48%,#17a017 52%,#17a017 100%)"><svg width="20" height="20"><path d="M6.8 4.6 L12.8 10 L6.8 15.4" fill="none" stroke="#fff" stroke-width="2.7"/></svg></div><div class="abs mi nw" style="left:275.3px;top:404.5px">Overnight-Index-Darlehen</div>
<div class="abs mh nw" style="left:509.0px;top:133.0px">Zinsderivate</div>
<div class="abs arr" style="left:508.5px;top:165.4px;background:linear-gradient(#cf7a12 0%,#cf7a12 48%,#b35f06 52%,#b35f06 100%)"><svg width="20" height="20"><path d="M6.8 4.6 L12.8 10 L6.8 15.4" fill="none" stroke="#fff" stroke-width="2.7"/></svg></div><div class="abs mi nw" style="left:534.8px;top:163.2px">Cap / Floor</div>
<div class="abs arr" style="left:508.5px;top:195.5px;background:linear-gradient(#cf7a12 0%,#cf7a12 48%,#b35f06 52%,#b35f06 100%)"><svg width="20" height="20"><path d="M6.8 4.6 L12.8 10 L6.8 15.4" fill="none" stroke="#fff" stroke-width="2.7"/></svg></div><div class="abs mi nw" style="left:534.8px;top:193.3px">Zinsswap</div>
<div class="abs arr" style="left:508.5px;top:225.7px;background:linear-gradient(#cf7a12 0%,#cf7a12 48%,#b35f06 52%,#b35f06 100%)"><svg width="20" height="20"><path d="M6.8 4.6 L12.8 10 L6.8 15.4" fill="none" stroke="#fff" stroke-width="2.7"/></svg></div><div class="abs mi nw" style="left:534.8px;top:223.5px">Collar</div>
<div class="abs arr" style="left:508.5px;top:255.9px;background:linear-gradient(#cf7a12 0%,#cf7a12 48%,#b35f06 52%,#b35f06 100%)"><svg width="20" height="20"><path d="M6.8 4.6 L12.8 10 L6.8 15.4" fill="none" stroke="#fff" stroke-width="2.7"/></svg></div><div class="abs mi nw" style="left:534.8px;top:253.7px">European Swaption</div>
<svg class="abs" style="left:245.8px;top:454.9px" width="26" height="26"><defs><linearGradient id="pg" x1="0" y1="0" x2="1" y2="1"><stop offset="0" stop-color="#f4f7fc"/><stop offset="1" stop-color="#9db8e2"/></linearGradient></defs><path d="M5.3 0.6h14l4.6 4.4v18.6H5.3z" fill="url(#pg)" stroke="#4a6597" stroke-width="1.1"/><path d="M19.3 0.6v4.4h4.6z" fill="#3c5582"/><path d="M17 7.5h5M17 10.5h5M17 13.5h5" stroke="#eef3fb" stroke-width="1.5"/><rect x="0.5" y="2.2" width="14.6" height="12.8" rx="1.2" fill="#1f931f"/><path d="M0.5 3.4 a1.2 1.2 0 0 1 1.2-1.2h11.5v1.6H2.5z" fill="#4fc24f"/><rect x="5" y="4.6" width="9.8" height="10.2" fill="#dbf6cd"/><path d="M6.7 6.6l6.2 6.4M12.9 6.6l-6.2 6.4" stroke="#3f9a3f" stroke-width="2.2"/><path d="M6 16.2h10" stroke="#8f9bb0" stroke-width="1.4"/><rect x="6.6" y="18.2" width="9" height="3.4" fill="#c9d9f2" stroke="#eef3fb" stroke-width=".8"/><circle cx="18.9" cy="17.9" r="4.7" fill="#5d9e3c" stroke="#7db35f" stroke-width=".8"/><path d="M16 17.9h5.8M18.9 15v5.8" stroke="#fff" stroke-width="1.9"/></svg>
<div class="abs mh nw" style="left:281px;top:455.5px">Import aus Excel-Datei</div>
<svg class="abs" style="left:488.7px;top:456.5px" width="20" height="23"><path d="M15.3 7.8 A6.1 6.1 0 1 0 11.3 14.9" fill="none" stroke="#5fae5d" stroke-width="6.6"/><path d="M15.3 7.8 A6.1 6.1 0 1 0 11.3 14.9" fill="none" stroke="#93cf8f" stroke-width="4.6"/><path d="M17.2 13.9 L11.4 21.7 L9.6 13.6 Z" fill="#3f9b42"/><path d="M15.6 14.6 L11.9 19.6 L10.9 14.4 Z" fill="#6fba6c"/></svg>
<div class="abs mh nw" style="left:521px;top:455.5px">Geschäftshistorie</div>
</body></html>
